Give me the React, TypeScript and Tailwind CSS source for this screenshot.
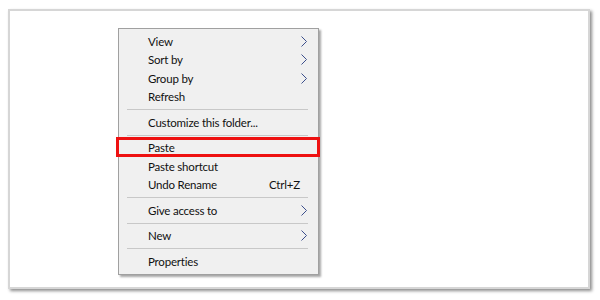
import React from 'react';

type Item =
  | { kind: 'item'; label: string; submenu?: boolean; shortcut?: string }
  | { kind: 'sep' };

const items: Item[] = [
  { kind: 'item', label: 'View', submenu: true },
  { kind: 'item', label: 'Sort by', submenu: true },
  { kind: 'item', label: 'Group by', submenu: true },
  { kind: 'item', label: 'Refresh' },
  { kind: 'sep' },
  { kind: 'item', label: 'Customize this folder...' },
  { kind: 'sep' },
  { kind: 'item', label: 'Paste' },
  { kind: 'item', label: 'Paste shortcut' },
  { kind: 'item', label: 'Undo Rename', shortcut: 'Ctrl+Z' },
  { kind: 'sep' },
  { kind: 'item', label: 'Give access to', submenu: true },
  { kind: 'sep' },
  { kind: 'item', label: 'New', submenu: true },
  { kind: 'sep' },
  { kind: 'item', label: 'Properties' },
];

// Little submenu arrow, same as the Windows 10 one
const Chevron = () => (
  <svg width="6" height="11" viewBox="0 0 6 11" className="shrink-0">
    <polyline points="0.5,0.5 5.5,5.5 0.5,10.5" fill="none" stroke="#3c4f8c" strokeWidth="1" />
  </svg>
);

const App: React.FC = () => {
  return (
    <div className="w-[600px] h-[300px] bg-white pt-[9px] pl-[8px]" style={{ fontFamily: 'Lato, "Noto Sans", sans-serif' }}>
      <div className="w-[582px] h-[280px] border-2 border-[#d6d6d6] bg-white shadow-[2px_2px_3px_rgba(0,0,0,0.45)] pt-[17px] pl-[108px]">
        <div className="relative w-[201px] bg-[#f0f0f0] border border-[#a0a0a0] py-[3px] shadow-[2px_2px_2px_rgba(0,0,0,0.35)]">
          {items.map((it, i) =>
            it.kind === 'sep' ? (
              <div key={i} className="h-[7px] flex items-center pl-[8px] pr-[10px]">
                <div className="w-full h-px bg-[#c8c8c8]" />
              </div>
            ) : (
              <div key={i} className="h-[18.5px] flex items-center pl-[29px] pr-[11px] text-[11.5px] tracking-[-0.2px] text-[#111] leading-none">
                <span className="flex-1">{it.label}</span>
                {it.shortcut && <span className="mr-[7px]">{it.shortcut}</span>}
                {it.submenu && <Chevron />}
              </div>
            )
          )}
          <div className="absolute left-[-3px] top-[108px] w-[204px] h-[20px] border-[3px] border-[#ee1111]" />
        </div>
      </div>
    </div>
  );
};

export default App;
